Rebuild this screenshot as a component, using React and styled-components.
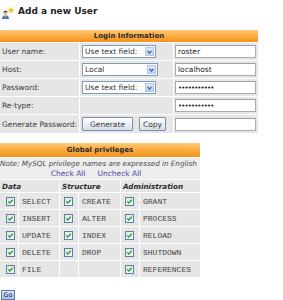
import React from 'react';
import styled, { createGlobalStyle } from 'styled-components';

const GlobalStyle = createGlobalStyle`
  html, body { margin: 0; padding: 0; background: #fff; }
  body {
    font-family: "DejaVu Sans", Verdana, sans-serif;
    font-size: 7.5px;
    color: #333;
    width: 283px;
    height: 300px;
    overflow: hidden;
  }
`;

const Page = styled.div`
  display: flex;
  flex-direction: column;
  align-items: flex-start;
`;

const Title = styled.h1`
  display: flex;
  align-items: center;
  gap: 2px;
  margin: 0;
  padding: 4px 0 0 1px;
  height: 14px;
  font-size: 9px;
  font-weight: bold;
  color: #222;
`;

const Table = styled.table`
  border-collapse: separate;
  border-spacing: 1px;
  margin: ${(p) => p.$mt}px 0 0 -1px;
  width: ${(p) => p.$w}px;
  font-size: 7.5px;
  table-layout: fixed;
`;

const HeadCell = styled.th`
  height: ${(p) => p.$h}px;
  padding: 0;
  background: linear-gradient(to bottom, #ffc877 0%, #fbae45 45%, #f6921c 100%);
  font-size: 7px;
  font-weight: bold;
  color: #2a2a2a;
  text-align: center;
`;

const Cell = styled.td`
  height: ${(p) => p.$h || 17}px;
  padding: 0 0 0 ${(p) => (p.$pl !== undefined ? p.$pl : 2)}px;
  background: #e6e6e6;
  color: #3a3a3a;
  white-space: nowrap;
  vertical-align: middle;
`;

const SelectBox = styled.div`
  display: flex;
  align-items: center;
  justify-content: space-between;
  box-sizing: border-box;
  width: ${(p) => p.$w}px;
  height: 13px;
  border: 1px solid #7f9db9;
  background: #fff;
  padding: 0 1px 0 2px;
  color: #333;
`;

const ArrowBox = styled.span`
  display: flex;
  align-items: center;
  justify-content: center;
  width: 9px;
  height: 9px;
  border: 1px solid #b3c7ec;
  background: linear-gradient(to bottom, #dde7fb, #b9cdf6);
  box-sizing: border-box;
`;

const TextInput = styled.input`
  box-sizing: border-box;
  width: 81px;
  height: 13px;
  margin: 0;
  padding: 0 2px;
  border: 1px solid #a5acb2;
  border-top-color: #9aa1a7;
  background: #fff;
  font-family: "DejaVu Sans", Verdana, sans-serif;
  font-size: ${(p) => (p.type === 'password' ? '7px' : '7.5px')};
  letter-spacing: ${(p) => (p.type === 'password' ? '-0.9px' : '0')};
  color: #222;
  outline: none;
`;

const ButtonRow = styled.div`
  display: flex;
  align-items: center;
  gap: 6px;
`;

const Button = styled.button`
  box-sizing: border-box;
  width: ${(p) => p.$w}px;
  height: 14px;
  margin: 0;
  padding: 0;
  border: 1px solid #7c8ea8;
  border-radius: 1px;
  background: linear-gradient(to bottom, #ffffff, #e9edf4 60%, #d6dde8);
  font-family: "DejaVu Sans", Verdana, sans-serif;
  font-size: 7.5px;
  color: #333;
`;

const NoteCell = styled.td`
  padding: 1px 0 1px 0;
  height: 19px;
  background: #ededed;
  text-align: center;
  line-height: 9.5px;
`;

const Note = styled.div`
  font-style: italic;
  font-size: 7.2px;
  color: #4a4a4a;
  white-space: nowrap;
  text-align: left;
`;

const Links = styled.div`
  display: flex;
  justify-content: center;
  gap: 12px;
  padding-right: 8px;
  font-size: 7.5px;
`;

const Link = styled.a`
  color: #4b4ba6;
  text-decoration: none;
`;

const GroupHead = styled.td`
  height: 12px;
  padding: 0 0 0 2px;
  background: #e6e6e6;
  font-weight: bold;
  font-style: italic;
  font-size: 7.2px;
  color: #2e2e2e;
  vertical-align: middle;
`;

const CheckCell = styled.td`
  height: 16px;
  padding: 0;
  background: #e6e6e6;
  text-align: center;
  vertical-align: middle;
`;

const PrivCell = styled.td`
  height: 16px;
  padding: 0 0 0 ${(p) => p.$pl || 3}px;
  background: #e6e6e6;
  font-family: "Liberation Mono", "Courier New", monospace;
  font-size: 8px;
  color: #444;
  vertical-align: middle;
  white-space: nowrap;
`;

const GoButton = styled.button`
  box-sizing: border-box;
  margin: 12px 0 0 1px;
  width: 14px;
  height: 10px;
  padding: 0;
  border: 1px solid #5d79ad;
  background: linear-gradient(to bottom, #dbe5f8, #a9bfe8);
  font-family: "DejaVu Sans", Verdana, sans-serif;
  font-size: 6.5px;
  line-height: 8px;
  color: #1f2f55;
`;

const CheckSvg = styled.svg`
  display: block;
  margin: 0 auto;
  position: relative;
  left: ${(p) => p.$dx || 0}px;
`;

function UserIcon() {
  return (
    <svg width="15" height="15" viewBox="0 0 15 15">
      <path d="M10 3.2 L10.7 5.3 L12.9 5.4 L11.2 6.7 L11.8 8.8 L10 7.6 L8.2 8.8 L8.8 6.7 L7.1 5.4 L9.3 5.3 Z" fill="#f7d21e" stroke="#d9a400" strokeWidth="0.4" />
      <circle cx="4.5" cy="9" r="2" fill="#e9b38a" />
      <path d="M2.4 8.6 Q2.6 6.6 4.6 6.7 Q6.6 6.8 6.6 8.5 Q5.4 7.6 2.4 8.6 Z" fill="#5b3a22" />
      <path d="M1 15 Q1 11.3 4.5 11.3 Q8 11.3 8 15 Z" fill="#5c78a8" />
      <path d="M3.8 11.4 L4.5 13 L5.2 11.4 Z" fill="#fff" />
    </svg>
  );
}

function Arrow() {
  return (
    <ArrowBox>
      <svg width="5" height="4" viewBox="0 0 5 4">
        <path d="M0.5 0.8 L2.5 3 L4.5 0.8" fill="none" stroke="#4d6185" strokeWidth="1.2" />
      </svg>
    </ArrowBox>
  );
}

function Select({ value, w }) {
  return (
    <SelectBox $w={w}>
      <span>{value}</span>
      <Arrow />
    </SelectBox>
  );
}

function Check({ dx }) {
  return (
    <CheckSvg $dx={dx} width="9" height="9" viewBox="0 0 9 9">
      <defs>
        <linearGradient id="cbg" x1="0" y1="0" x2="1" y2="1">
          <stop offset="0" stopColor="#dfe4ea" />
          <stop offset="1" stopColor="#f8f9fb" />
        </linearGradient>
      </defs>
      <rect x="0.5" y="0.5" width="8" height="8" fill="url(#cbg)" stroke="#5f7f9f" />
      <path d="M2.2 4.4 L3.8 6 L6.8 2.8" fill="none" stroke="#22a12a" strokeWidth="1.3" />
    </CheckSvg>
  );
}

const privRows = [
  ['SELECT', 'CREATE', 'GRANT'],
  ['INSERT', 'ALTER', 'PROCESS'],
  ['UPDATE', 'INDEX', 'RELOAD'],
  ['DELETE', 'DROP', 'SHUTDOWN'],
  ['FILE', null, 'REFERENCES'],
];

export default function App() {
  return (
    <Page>
      <GlobalStyle />
      <Title>
        <UserIcon />
        <span>Add a new User</span>
      </Title>

      <Table $mt={11} $w={260}>
        <colgroup>
          <col style={{ width: 79 }} />
          <col style={{ width: 93 }} />
          <col style={{ width: 84 }} />
        </colgroup>
        <thead>
          <tr>
            <HeadCell colSpan={3} $h={12}>Login Information</HeadCell>
          </tr>
        </thead>
        <tbody>
          <tr>
            <Cell>User name:</Cell>
            <Cell><Select value="Use text field:" w={74} /></Cell>
            <Cell $pl={1}><TextInput type="text" defaultValue="roster" readOnly /></Cell>
          </tr>
          <tr>
            <Cell>Host:</Cell>
            <Cell><Select value="Local" w={76} /></Cell>
            <Cell $pl={1}><TextInput type="text" defaultValue="localhost" readOnly /></Cell>
          </tr>
          <tr>
            <Cell>Password:</Cell>
            <Cell><Select value="Use text field:" w={74} /></Cell>
            <Cell $pl={1}><TextInput type="password" defaultValue="rootpasswd1" readOnly /></Cell>
          </tr>
          <tr>
            <Cell>Re-type:</Cell>
            <Cell />
            <Cell $pl={1}><TextInput type="password" defaultValue="rootpasswd1" readOnly /></Cell>
          </tr>
          <tr>
            <Cell $h={18}>Generate Password:</Cell>
            <Cell $h={18}>
              <ButtonRow>
                <Button $w={51}>Generate</Button>
                <Button $w={27}>Copy</Button>
              </ButtonRow>
            </Cell>
            <Cell $h={18} $pl={1}><TextInput type="text" defaultValue="" readOnly /></Cell>
          </tr>
        </tbody>
      </Table>

      <Table $mt={8} $w={202}>
        <colgroup>
          <col style={{ width: 18 }} />
          <col style={{ width: 40 }} />
          <col style={{ width: 18 }} />
          <col style={{ width: 41 }} />
          <col style={{ width: 18 }} />
          <col style={{ width: 60 }} />
        </colgroup>
        <thead>
          <tr>
            <HeadCell colSpan={6} $h={14}>Global privileges</HeadCell>
          </tr>
        </thead>
        <tbody>
          <tr>
            <NoteCell colSpan={6}>
              <Note>Note: MySQL privilege names are expressed in English</Note>
              <Links>
                <Link href="#">Check All</Link>
                <Link href="#">Uncheck All</Link>
              </Links>
            </NoteCell>
          </tr>
          <tr>
            <GroupHead colSpan={2}>Data</GroupHead>
            <GroupHead colSpan={2}>Structure</GroupHead>
            <GroupHead colSpan={2}>Administration</GroupHead>
          </tr>
          {privRows.map((r) => (
            <tr key={r[0]}>
              <CheckCell><Check dx={1} /></CheckCell>
              <PrivCell>{r[0]}</PrivCell>
              {r[1] ? (
                <>
                  <CheckCell><Check dx={-1} /></CheckCell>
                  <PrivCell>{r[1]}</PrivCell>
                </>
              ) : (
                <>
                  <CheckCell />
                  <PrivCell />
                </>
              )}
              <CheckCell><Check dx={-1} /></CheckCell>
              <PrivCell>{r[2]}</PrivCell>
            </tr>
          ))}
        </tbody>
      </Table>

      <GoButton>Go</GoButton>
    </Page>
  );
}
